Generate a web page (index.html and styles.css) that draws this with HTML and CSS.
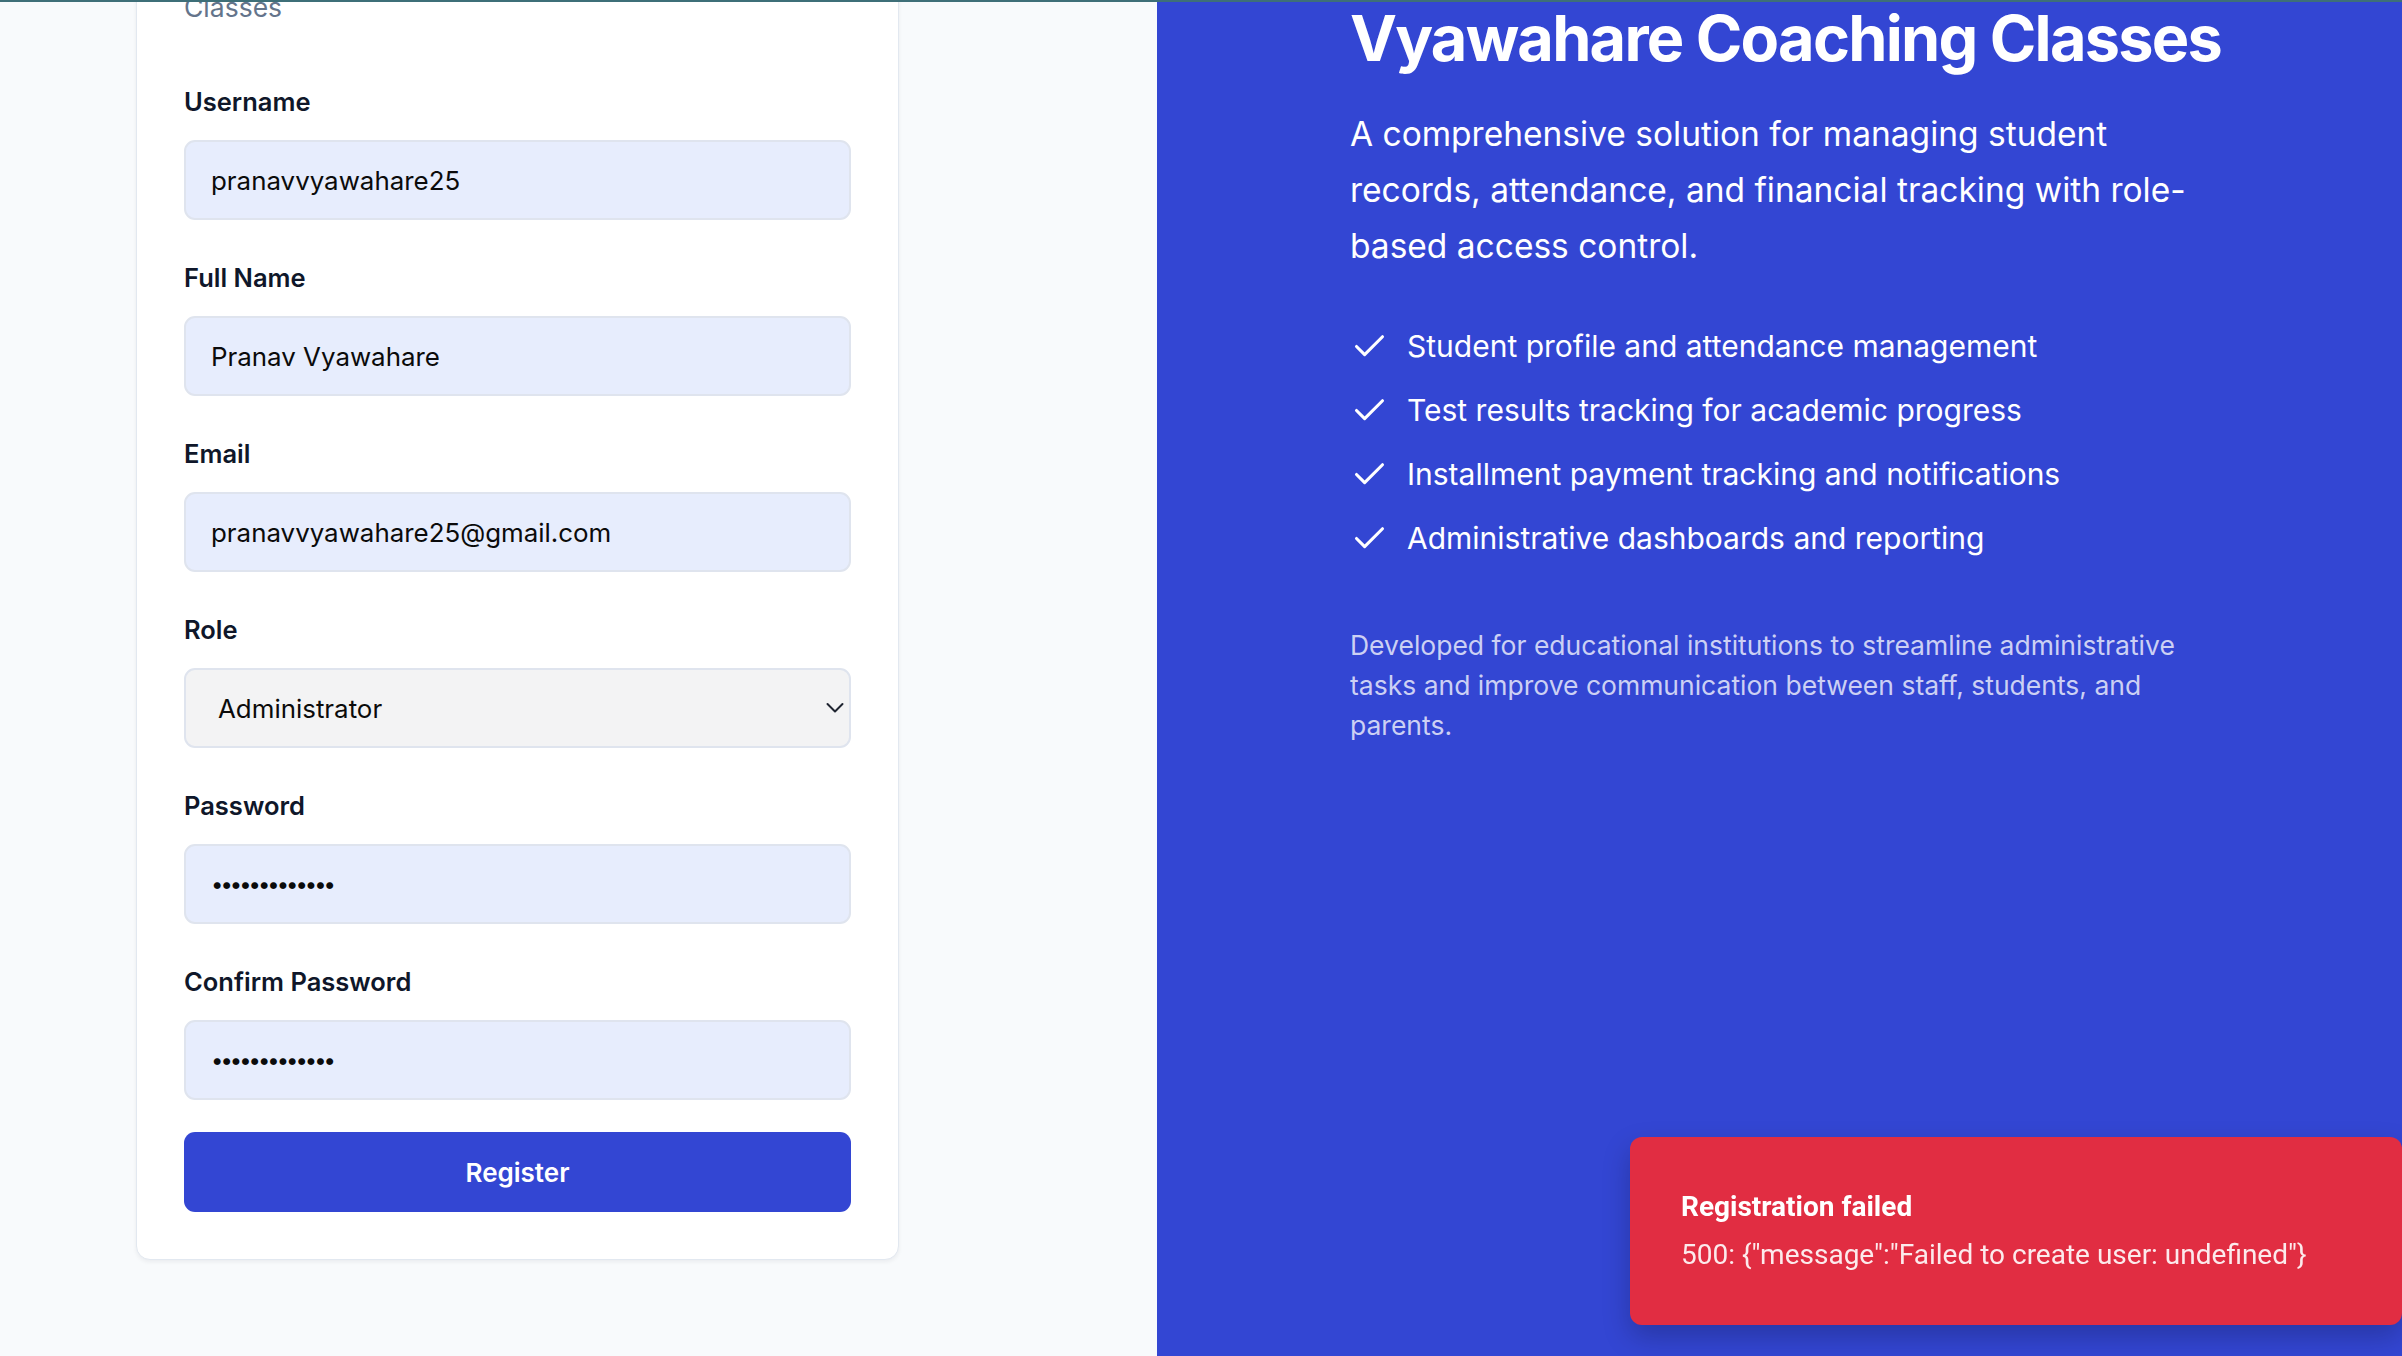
FILE: index.html
```html
<!DOCTYPE html>
<html lang="en">
<head>
<meta charset="utf-8">
<title>Register - Vyawahare Coaching Classes</title>
<link rel="stylesheet" href="styles.css">
</head>
<body>
<div class="topline"></div>
<main class="layout">
  <section class="left">
    <div class="card">
      <p class="card-desc">Classes</p>
      <form class="form">
        <div class="fields">
          <div class="field">
            <label class="label" for="username">Username</label>
            <input class="input" id="username" type="text" value="pranavvyawahare25">
          </div>
          <div class="field">
            <label class="label" for="fullname">Full Name</label>
            <input class="input" id="fullname" type="text" value="Pranav Vyawahare">
          </div>
          <div class="field">
            <label class="label" for="email">Email</label>
            <input class="input" id="email" type="email" value="pranavvyawahare25@gmail.com">
          </div>
          <div class="field">
            <label class="label" for="role">Role</label>
            <div class="select-wrap">
              <select class="select" id="role">
                <option>Administrator</option>
                <option>Teacher</option>
                <option>Student</option>
              </select>
              <svg class="chevron" width="18" height="12" viewBox="0 0 18 12" aria-hidden="true"><path d="M1.5 2 9 9.5 16.5 2" fill="none" stroke="#1f2430" stroke-width="2" stroke-linecap="round" stroke-linejoin="round"/></svg>
            </div>
          </div>
          <div class="field">
            <label class="label" for="password">Password</label>
            <input class="input password" id="password" type="password" value="abcdefghijklm">
          </div>
          <div class="field">
            <label class="label" for="confirm">Confirm Password</label>
            <input class="input password" id="confirm" type="password" value="abcdefghijklm">
          </div>
        </div>
        <button class="btn" type="button">Register</button>
      </form>
    </div>
  </section>
  <section class="right">
    <div class="hero">
      <h1 class="title">Vyawahare Coaching Classes</h1>
      <p class="subtitle">A comprehensive solution for managing student records, attendance, and financial tracking with role-based access control.</p>
      <ul class="features">
        <li class="feature"><svg class="check" width="39" height="39" viewBox="0 0 24 24" aria-hidden="true"><path d="M20 6 9 17l-5-5" fill="none" stroke="#fff" stroke-width="1.9" stroke-linecap="round" stroke-linejoin="round"/></svg><span>Student profile and attendance management</span></li>
        <li class="feature"><svg class="check" width="39" height="39" viewBox="0 0 24 24" aria-hidden="true"><path d="M20 6 9 17l-5-5" fill="none" stroke="#fff" stroke-width="1.9" stroke-linecap="round" stroke-linejoin="round"/></svg><span>Test results tracking for academic progress</span></li>
        <li class="feature"><svg class="check" width="39" height="39" viewBox="0 0 24 24" aria-hidden="true"><path d="M20 6 9 17l-5-5" fill="none" stroke="#fff" stroke-width="1.9" stroke-linecap="round" stroke-linejoin="round"/></svg><span>Installment payment tracking and notifications</span></li>
        <li class="feature"><svg class="check" width="39" height="39" viewBox="0 0 24 24" aria-hidden="true"><path d="M20 6 9 17l-5-5" fill="none" stroke="#fff" stroke-width="1.9" stroke-linecap="round" stroke-linejoin="round"/></svg><span>Administrative dashboards and reporting</span></li>
      </ul>
      <p class="desc">Developed for educational institutions to streamline administrative tasks and improve communication between staff, students, and parents.</p>
    </div>
  </section>
</main>
<div class="toast" role="status">
  <div class="toast-title">Registration failed</div>
  <div class="toast-msg">500: {"message":"Failed to create user: undefined"}</div>
</div>
</body>
</html>
```
FILE: styles.css
```css
* { box-sizing: border-box; }
html, body { margin: 0; padding: 0; }
body {
  width: 2402px;
  height: 1356px;
  overflow: hidden;
  font-family: Inter, "Noto Sans", sans-serif;
  color: #0f172a;
  background: #f8fafc;
}
.topline {
  position: fixed;
  top: 0; left: 0; right: 0;
  height: 2px;
  background: #3e6f78;
  z-index: 10;
}
.layout {
  display: grid;
  grid-template-columns: 1157px 1fr;
  height: 1356px;
}
.left {
  background: #f8fafc;
  padding-left: 136px;
  overflow: hidden;
}
.card {
  width: 763px;
  margin-top: -60px;
  background: #fff;
  border: 1px solid #e2e8f0;
  border-radius: 14px;
  box-shadow: 0 2px 4px rgba(15, 23, 42, 0.06);
  padding: 48px 47px 47px;
}
.card-desc {
  margin: 0 0 61px;
  font-size: 26.5px;
  line-height: 36px;
  color: #64748b;
}
.form { display: flex; flex-direction: column; gap: 32px; }
.fields { display: flex; flex-direction: column; gap: 42px; }
.field { display: flex; flex-direction: column; gap: 22px; }
.label {
  font-size: 25.5px;
  line-height: 32px;
  font-weight: 600;
  color: #0f172a;
}
.input, .select {
  width: 100%;
  height: 80px;
  border: 2px solid #dfe4ee;
  border-radius: 11px;
  background: #e7edfd;
  font-family: Inter, "Noto Sans", sans-serif;
  font-size: 25.9px;
  color: #0b0b0b;
  padding: 0 25px;
  outline: none;
}
.password {
  font-size: 22px;
  letter-spacing: -3px;
}
.select-wrap { position: relative; }
.select {
  appearance: none;
  -webkit-appearance: none;
  background: #f3f3f4;
  padding-left: 32px;
}
.chevron {
  position: absolute;
  right: 7px;
  top: 34px;
  pointer-events: none;
}
.btn {
  height: 80px;
  border: none;
  border-radius: 11px;
  background: #3346d3;
  color: #fff;
  font-family: Inter, "Noto Sans", sans-serif;
  font-size: 26px;
  font-weight: 600;
}
.right {
  background: #3346d3;
  padding-left: 193px;
  color: #fff;
}
.hero { width: 880px; }
.title {
  margin: 0;
  font-size: 63px;
  line-height: 76px;
  font-weight: 700;
  letter-spacing: -1.75px;
  white-space: nowrap;
}
.subtitle {
  max-width: 850px;
  margin: 30px 0 0;
  font-size: 33.5px;
  line-height: 56px;
}
.features {
  list-style: none;
  margin: 51px 0 0;
  padding: 0;
  display: flex;
  flex-direction: column;
  gap: 22px;
}
.feature {
  display: flex;
  align-items: center;
  gap: 18px;
  font-size: 30px;
  line-height: 42px;
}
.check { flex: none; }
.desc {
  max-width: 870px;
  margin: 66px 0 0;
  font-size: 26.5px;
  line-height: 40px;
  color: rgba(255, 255, 255, 0.76);
}
.toast {
  position: fixed;
  left: 1630px;
  right: 0;
  top: 1137px;
  height: 188px;
  background: #e12d42;
  border-radius: 12px;
  padding: 50px 40px 0 51px;
  box-shadow: 0 12px 28px rgba(0, 0, 0, 0.22);
  font-family: Roboto, "Liberation Sans", sans-serif;
  color: #fff;
}
.toast-title {
  font-size: 28px;
  line-height: 40px;
  font-weight: 700;
}
.toast-msg {
  margin-top: 8px;
  font-size: 28px;
  line-height: 40px;
  color: rgba(255, 255, 255, 0.9);
}
```
